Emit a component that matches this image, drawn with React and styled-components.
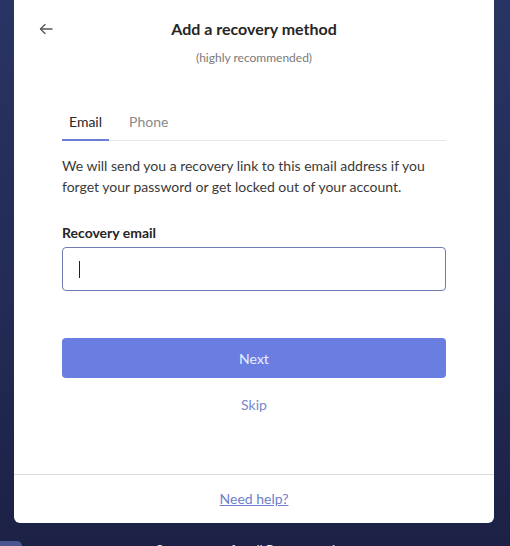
import React from "react";
import styled, { createGlobalStyle } from "styled-components";

const Global = createGlobalStyle`
  html, body { margin: 0; padding: 0; }
  body {
    width: 510px;
    height: 546px;
    overflow: hidden;
    background: linear-gradient(180deg, #283463 0%, #232b56 55%, #1c2145 100%);
    font-family: Lato, "Noto Sans", "Liberation Sans", sans-serif;
    -webkit-font-smoothing: antialiased;
  }
`;

const Page = styled.div`
  position: relative;
  display: flex;
  flex-direction: column;
  align-items: stretch;
  padding: 0 16px 0 14px;
  height: 546px;
  box-sizing: border-box;
`;

const Card = styled.main`
  margin-top: -6px;
  background: #fff;
  border-radius: 6px;
  display: flex;
  flex-direction: column;
`;

const Body = styled.div`
  padding: 23px 48px 0;
  display: flex;
  flex-direction: column;
`;

const Header = styled.header`
  display: grid;
  grid-template-columns: 40px 1fr 40px;
  align-items: center;
  margin: 0 -24px;
`;

const BackButton = styled.button`
  border: none;
  background: none;
  padding: 0;
  width: 16px;
  height: 16px;
  display: flex;
  align-items: center;
  justify-content: center;
  color: #555;
  cursor: pointer;
`;

const Title = styled.h1`
  margin: 0;
  font-size: 16px;
  line-height: 24px;
  font-weight: 700;
  color: #262626;
  text-align: center;
`;

const Subtitle = styled.p`
  margin: 8px 0 0;
  font-size: 12px;
  line-height: 18px;
  color: #7a7a7a;
  text-align: center;
`;

const Tabs = styled.div`
  margin-top: 45px;
  display: flex;
  gap: 13px;
  border-bottom: 1px solid #e6e6ea;
`;

const Tab = styled.button`
  border: none;
  background: none;
  font-family: inherit;
  font-size: 14px;
  line-height: 20px;
  padding: 0 7px 7px;
  margin-bottom: -1px;
  color: ${(p) => (p.$active ? "#262626" : "#8a8a8a")};
  border-bottom: 2px solid ${(p) => (p.$active ? "#6d7ed6" : "transparent")};
  cursor: pointer;
`;

const Text = styled.p`
  margin: 14px 0 0;
  font-size: 14px;
  line-height: 21px;
  color: #3a3a3a;
`;

const Label = styled.label`
  margin-top: 26px;
  font-size: 14px;
  line-height: 20px;
  font-weight: 700;
  color: #262626;
`;

const InputBox = styled.div`
  margin-top: 4px;
  height: 44px;
  box-sizing: border-box;
  border: 1px solid #6f7cb3;
  border-radius: 4px;
  display: flex;
  align-items: center;
  padding: 0 16px;
`;

const Caret = styled.span`
  width: 1px;
  height: 17px;
  background: #222;
`;

const Primary = styled.button`
  margin-top: 47px;
  height: 40px;
  border: none;
  border-radius: 4px;
  background: #6a7ee2;
  color: #e9edff;
  font-family: inherit;
  font-size: 14px;
  cursor: pointer;
`;

const LinkButton = styled.button`
  margin: 17px auto 0;
  border: none;
  background: none;
  padding: 0;
  font-family: inherit;
  font-size: 14px;
  line-height: 20px;
  color: #7887cc;
  cursor: pointer;
`;

const Footer = styled.footer`
  margin-top: 59px;
  border-top: 1px solid #dcdcdc;
  padding: 14px 0;
  display: flex;
  justify-content: center;
`;

const HelpLink = styled.a`
  font-size: 14px;
  line-height: 20px;
  color: #6f80c8;
  text-decoration: underline;
`;

const Tagline = styled.p`
  margin: 18px 0 0;
  text-align: center;
  color: #f2f3f8;
  font-size: 13px;
  line-height: 18px;
`;

const Corner = styled.div`
  position: absolute;
  left: -4px;
  top: 541px;
  width: 26px;
  height: 24px;
  border-radius: 5px;
  background: #4b5691;
`;

export default function App() {
  return (
    <>
      <Global />
      <Page>
        <Card>
          <Body>
            <Header>
              <BackButton aria-label="Back">
                <svg width="14" height="12" viewBox="0 0 14 12" fill="none" stroke="currentColor" strokeWidth="1.3" strokeLinecap="round" strokeLinejoin="round">
                  <path d="M13 6H1.5" />
                  <path d="M6 1.5L1.5 6L6 10.5" />
                </svg>
              </BackButton>
              <Title>Add a recovery method</Title>
              <span />
            </Header>
            <Subtitle>(highly recommended)</Subtitle>
            <Tabs>
              <Tab $active>Email</Tab>
              <Tab>Phone</Tab>
            </Tabs>
            <Text>
              We will send you a recovery link to this email address if you forget your password or get locked out of your account.
            </Text>
            <Label>Recovery email</Label>
            <InputBox>
              <Caret />
            </InputBox>
            <Primary>Next</Primary>
            <LinkButton>Skip</LinkButton>
          </Body>
          <Footer>
            <HelpLink href="#">Need help?</HelpLink>
          </Footer>
        </Card>
        <Tagline>One account for all Proton services</Tagline>
        <Corner />
      </Page>
    </>
  );
}
